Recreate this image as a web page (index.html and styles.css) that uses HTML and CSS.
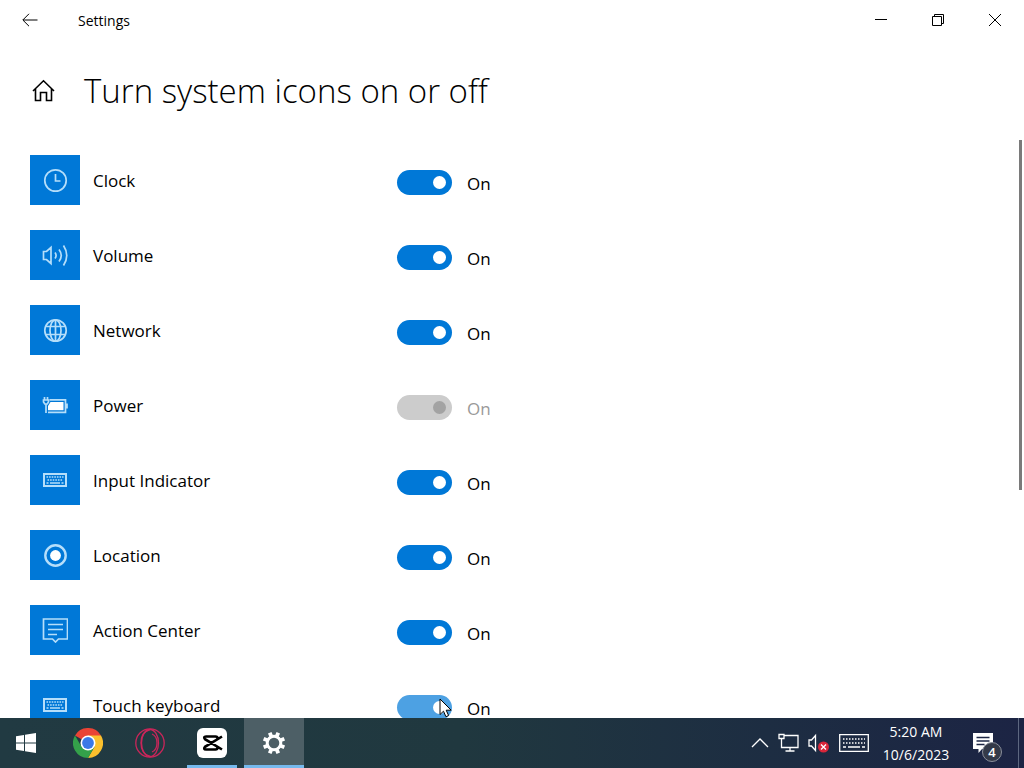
FILE: index.html
```html
<!DOCTYPE html>
<html lang="en">
<head>
  <meta charset="UTF-8" />
  <meta name="viewport" content="width=device-width, initial-scale=1.0"/>
  <title>Settings</title>
  <link rel="stylesheet" href="styles.css">
</head>
<body>
  <svg class="defs" aria-hidden="true">
    <symbol id="keyboard" viewBox="0 0 24 14">
      <path d="M1 1h22v12H1z" fill="none" stroke="currentColor" stroke-width="2"/>
      <path d="M3.5 4h17M4.5 7h15" fill="none" stroke="currentColor" stroke-width="1.6" stroke-dasharray="1.6 1"/>
      <path d="M3.5 10h2M7 10h10M18.5 10h2" fill="none" stroke="currentColor" stroke-width="1.5"/>
    </symbol>
  </svg>

  <div class="window">
    <header class="titlebar">
      <button class="back" aria-label="Back">
        <svg width="16" height="14" viewBox="0 0 16 14"><path d="M15.500 7H1M7 .8L.8 7 7 13.200"/></svg>
      </button>
      <span class="app-name">Settings</span>
      <div class="window-buttons">
        <button aria-label="Minimize"><svg width="12" height="12" viewBox="0 0 12 12"><path d="M0 5.500h12"/></svg></button>
        <button aria-label="Restore"><svg width="12" height="12" viewBox="0 0 12 12"><path d="M.5 2.500h9v9h-9zM2.500 2.500v-2h9v9h-2"/></svg></button>
        <button aria-label="Close"><svg width="12" height="12" viewBox="0 0 12 12"><path d="M0 0l12 12M12 0L0 12"/></svg></button>
      </div>
    </header>

    <div class="page-head">
      <button class="home" aria-label="Home">
        <svg width="24" height="24" viewBox="0 0 24 24"><path d="M1 13L11.500 2.800 22 13M3.500 11v11.500h5v-8h6v8h5V11"/></svg>
      </button>
      <h1>Turn system icons on or off</h1>
    </div>

    <main class="content">
      <ul class="icon-list">
        <li>
          <span class="tile"><svg viewBox="0 0 26 26"><circle cx="13.500" cy="13.500" r="10.700"/><path d="M13.500 7v7h5"/></svg></span>
          <label for="clock">Clock</label>
          <div class="switch"><input type="checkbox" id="clock" checked><span>On</span></div>
        </li>
        <li>
          <span class="tile"><svg viewBox="0 0 26 26"><path d="M1.500 9.500h3l4.500-4v16l-4.500-4h-3zM13 10.500q2.200 3 0 6M17 7.500q4.500 6 0 12M21.500 3.500q6.500 10 0 20"/></svg></span>
          <label for="volume">Volume</label>
          <div class="switch"><input type="checkbox" id="volume" checked><span>On</span></div>
        </li>
        <li>
          <span class="tile"><svg viewBox="0 0 26 26"><circle cx="13.500" cy="13.500" r="10.700"/><ellipse cx="13.500" cy="13.500" rx="5.500" ry="10.700"/><path d="M13.500 3v21M4 9.500h19M4 17.500h19"/></svg></span>
          <label for="network">Network</label>
          <div class="switch"><input type="checkbox" id="network" checked><span>On</span></div>
        </li>
        <li>
          <span class="tile"><svg viewBox="0 0 26 26"><path d="M7.500 7.800h16v12.500H6M25 11.500v5M4 12v9M2.500 5v3M5.500 5v3"/><path d="M1.500 8h5v2l-1.300 2H2.800l-1.300-2z"/><path class="solid" d="M8.500 10h13v8.300H6V14z"/></svg></span>
          <label for="power">Power</label>
          <div class="switch"><input type="checkbox" id="power" checked disabled><span>On</span></div>
        </li>
        <li>
          <span class="tile"><svg class="keys"><use href="#keyboard"/></svg></span>
          <label for="input">Input Indicator</label>
          <div class="switch"><input type="checkbox" id="input" checked><span>On</span></div>
        </li>
        <li>
          <span class="tile"><svg viewBox="0 0 26 26"><circle class="ring" cx="13.500" cy="13.500" r="10.200"/><circle class="solid" cx="13.500" cy="13.500" r="5.400"/></svg></span>
          <label for="location">Location</label>
          <div class="switch"><input type="checkbox" id="location" checked><span>On</span></div>
        </li>
        <li>
          <span class="tile"><svg viewBox="0 0 26 26"><path d="M1.500 2h24v20h-9L13.500 25l-3-3h-9zM6 7.500h15M6 12.500h15M6 17.500h9"/></svg></span>
          <label for="action">Action Center</label>
          <div class="switch"><input type="checkbox" id="action" checked><span>On</span></div>
        </li>
        <li>
          <span class="tile"><svg class="keys"><use href="#keyboard"/></svg></span>
          <label for="touch">Touch keyboard</label>
          <div class="switch hovered">
            <input type="checkbox" id="touch" checked><span>On</span>
            <svg class="pointer" width="14" height="20" viewBox="0 0 14 20"><path d="M1 1v15.500l3.500-3.300 2.400 5.500 2.700-1.200-2.400-5.300h5z"/></svg>
          </div>
        </li>
      </ul>
      <div class="scroll-thumb"></div>
    </main>
  </div>

  <footer class="taskbar">
    <nav class="apps">
      <button class="start" aria-label="Start">
        <svg width="20" height="20" viewBox="0 0 20 20"><path fill="#fff" d="M0 3.200L8 2v7.500H0zM9 1.800L20 0v9.500H9zM0 10.500h8V18l-8-1.200zM9 10.500h11V20L9 18.200z"/></svg>
      </button>
      <button aria-label="Chrome">
        <svg width="30" height="30" viewBox="0 0 30 30">
          <path fill="#ea4335" d="M15 15L2 7.500A15 15 0 0 1 28 7.500z"/>
          <path fill="#fbc02d" d="M15 15V7.500h13A15 15 0 0 1 15 30l6.500-11.200z"/>
          <path fill="#34a04a" d="M15 15l6.500 3.800L15 30A15 15 0 0 1 2 7.500l6.500 11.200z"/>
          <circle cx="15" cy="15" r="7.500" fill="#fff"/>
          <circle cx="15" cy="15" r="5.900" fill="#3b78e7"/>
        </svg>
      </button>
      <button aria-label="Opera GX">
        <svg width="30" height="30" viewBox="0 0 30 30" fill="none" stroke="#c9265a" stroke-width="1.300">
          <circle cx="15" cy="15" r="14.200"/><ellipse cx="15" cy="15" rx="8.500" ry="13.500"/><path d="M15 1.500Q6 4 6 15t9 13.500M17 6q5 2 5 9t-5 9"/>
        </svg>
      </button>
      <button class="running" aria-label="CapCut">
        <svg width="30" height="30" viewBox="0 0 30 30">
          <rect width="30" height="30" rx="6" fill="#fff"/>
          <path d="M25 8.500L8 18.800q-2 2.700 1 2.700h9.500q2 0 2-2v-.8M25 21.500L8 11.200Q6 8.500 9 8.500h9.500q2 0 2 2v1" fill="none" stroke="#000" stroke-width="2.600"/>
        </svg>
      </button>
      <button class="running active" aria-label="Settings">
        <svg width="24" height="24" viewBox="0 0 24 24" fill="none" stroke="#fff">
          <circle cx="12" cy="12" r="6.800" stroke-width="3"/>
          <g stroke-width="3.800" transform="rotate(22.500 12 12)">
            <path d="M12 .8v4M12 19.200v4M.8 12h4M19.200 12h4M4.100 4.100l2.800 2.800M17.100 17.100l2.800 2.800M19.900 4.100l-2.800 2.800M6.900 17.100l-2.800 2.800"/>
          </g>
        </svg>
      </button>
    </nav>

    <div class="tray">
      <button aria-label="Show hidden icons"><svg width="18" height="12" viewBox="0 0 18 12"><path d="M1 10l8-8 8 8"/></svg></button>
      <button aria-label="Network"><svg width="21" height="20" viewBox="0 0 21 20"><path d="M6 2.500h14v12H3.500V8M12 14.500V18M7.500 18h9M1 1.500h5v4H1zM3.500 5.500V9"/></svg></button>
      <button aria-label="Volume, muted"><svg width="22" height="20" viewBox="0 0 22 20"><path d="M1 7h2.500l4-4.500v15l-4-4.500H1z"/><circle cx="15.500" cy="14" r="5.500" fill="#d9263a" stroke="none"/><path d="M13 11.500l5 5M18 11.500l-5 5"/></svg></button>
      <button aria-label="Touch keyboard"><svg width="30" height="18" viewBox="0 0 30 18"><path d="M.7.7h28.600v16.600H.7zM4 13h3M9 13h12M23 13h3"/><path stroke-dasharray="1.500 1.500" d="M4 5h22M4 9h22"/></svg></button>
      <div class="clock"><time>5:20 AM</time><time>10/6/2023</time></div>
      <button class="notices" aria-label="Notifications">
        <svg width="20" height="20" viewBox="0 0 20 20"><path fill="#fff" stroke="none" d="M0 0h20v16H9l-3.500 4v-4H0z"/><path stroke="#1d2745" d="M3.500 4.500h13M3.500 8h13M3.500 11.500h8"/></svg>
        <span class="badge">4</span>
      </button>
    </div>
  </footer>
</body>
</html>
```
FILE: styles.css
```css
* {
  box-sizing: border-box;
}
body {
  margin: 0;
  height: 100vh;
  display: flex;
  flex-direction: column;
  overflow: hidden;
  font-family: "Open Sans", "Noto Sans", sans-serif;
  font-size: 17px;
  color: #000;
  background: #fff;
}
button {
  display: flex;
  align-items: center;
  justify-content: center;
  padding: 0;
  border: none;
  background: none;
  font-family: inherit;
}
svg {
  display: block;
}
.defs {
  display: none;
}

/* window */
.window {
  flex: 1;
  min-height: 0;
  display: flex;
  flex-direction: column;
}
.titlebar {
  display: flex;
  align-items: center;
  height: 40px;
}
.titlebar svg,
.home svg {
  fill: none;
  stroke: #000;
}
.back {
  width: 60px;
  height: 40px;
}
.app-name {
  padding-left: 18px;
  font-size: 14px;
}
.window-buttons {
  display: flex;
  margin-left: auto;
  padding-right: 1px;
}
.window-buttons button {
  width: 57px;
  height: 40px;
}
.page-head {
  display: flex;
  align-items: center;
  gap: 28px;
  height: 100px;
  padding-left: 32px;
}
.home svg {
  stroke-width: 1.6;
}
h1 {
  margin: 0;
  font-size: 33px;
  font-weight: 300;
  white-space: nowrap;
}

/* list of icons */
.content {
  flex: 1;
  min-height: 0;
  position: relative;
  overflow: hidden;
}
.icon-list {
  list-style: none;
  margin: 0;
  padding: 15px 30px;
  display: grid;
  gap: 25px;
}
.icon-list li {
  display: grid;
  grid-template-columns: 50px 291px auto;
  column-gap: 13px;
  align-items: center;
  height: 50px;
}
.tile {
  display: flex;
  align-items: center;
  justify-content: center;
  height: 50px;
  background: #0078d7;
  color: #b5defa;
}
.tile svg {
  width: 26px;
  height: 26px;
  fill: none;
  stroke: currentColor;
  stroke-width: 1.7;
}
.tile .keys {
  width: 24px;
  height: 14px;
}
.tile .solid {
  fill: #fff;
  stroke: none;
}
.tile .ring {
  stroke-width: 2.4;
}
.switch {
  position: relative;
  display: flex;
  align-items: center;
  gap: 15px;
  padding-top: 5px;
}
.switch span {
  padding-top: 2px;
}
.switch input {
  appearance: none;
  display: flex;
  align-items: center;
  justify-content: flex-end;
  width: 55px;
  height: 25px;
  margin: 0;
  padding: 6px;
  border-radius: 13px;
  background: #0078d7;
}
.switch input::before {
  content: "";
  width: 13px;
  height: 13px;
  border-radius: 50%;
  background: #fff;
}
.switch input:not(:checked) {
  justify-content: flex-start;
  background: #999;
}
.switch input:disabled {
  background: #ccc;
}
.switch input:disabled::before {
  background: #a3a3a3;
}
.switch input:disabled + span {
  color: #999;
}
.switch.hovered input {
  background: #4da1e3;
}
.pointer {
  position: absolute;
  left: 42px;
  top: 8px;
  fill: #fff;
  stroke: #000;
}
.scroll-thumb {
  position: absolute;
  top: 0;
  right: 2px;
  width: 3px;
  height: 350px;
  background: #7a7a7a;
}

/* taskbar */
.taskbar {
  display: flex;
  justify-content: space-between;
  height: 50px;
  color: #fff;
  background: linear-gradient(90deg, #213a42, #20383f 45%, #1d2d42 75%, #1c2444);
}
.apps {
  display: flex;
  gap: 2px;
}
.apps button {
  position: relative;
  width: 60px;
}
.apps .start {
  width: 56px;
  padding-right: 4px;
}
.apps .active {
  background: #4d5f66;
}
.running::after {
  content: "";
  position: absolute;
  left: 5px;
  right: 5px;
  bottom: 0;
  height: 3px;
  background: #76b9ed;
}
.active::after {
  left: 0;
  right: 0;
}
.tray {
  display: flex;
  align-items: center;
  gap: 9px;
  padding-right: 5px;
}
.tray svg {
  fill: none;
  stroke: #fff;
  stroke-width: 1.3;
}
.clock {
  display: flex;
  flex-direction: column;
  align-items: center;
  width: 76px;
  font-size: 14px;
  line-height: 23px;
}
.notices {
  position: relative;
  width: 56px;
  height: 50px;
  padding-right: 16px;
  border-right: 1px solid #5d6780;
}
.badge {
  position: absolute;
  left: 19px;
  top: 24px;
  width: 20px;
  height: 20px;
  border: 1px solid #8b909c;
  border-radius: 50%;
  background: #343a49;
  color: #fff;
  font-size: 13px;
  font-weight: 600;
  line-height: 18px;
  text-align: center;
}
```
